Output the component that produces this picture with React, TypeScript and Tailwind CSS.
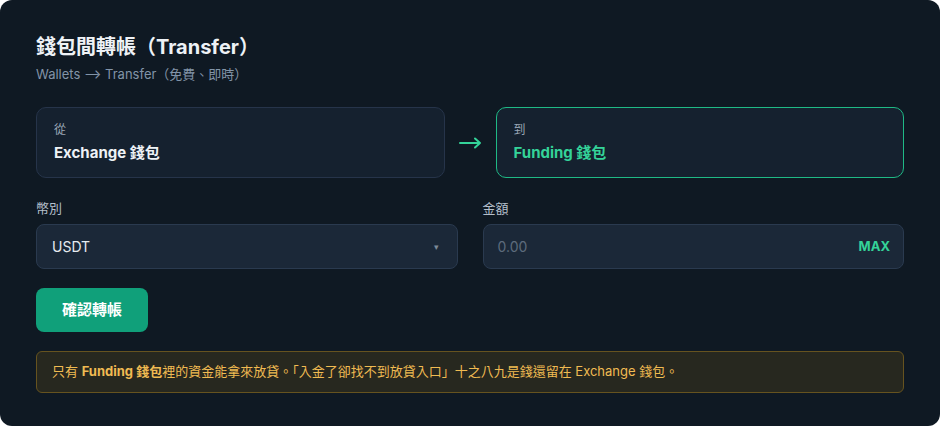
import React from "react";

const font = { fontFamily: '"Inter", "Noto Sans CJK TC", sans-serif' };

function WalletBox({ label, name, active }: { label: string; name: string; active?: boolean }) {
  return (
    <div
      className={`flex-1 h-[71px] rounded-[10px] border px-[17px] pt-[14px] ${
        active ? "border-[#1fb985] bg-[#15212f]" : "border-[#26344a] bg-[#15212f]"
      }`}
    >
      <div className="text-[12px] leading-4 text-[#9aa7b6]">{label}</div>
      <div className={`mt-[5px] text-[15px] leading-5 font-bold ${active ? "text-[#34d399]" : "text-[#eef2f6]"}`}>
        {name}
      </div>
    </div>
  );
}

export default function App() {
  return (
    <div style={font} className="w-[940px] h-[426px] bg-white">
      <div className="w-full h-full rounded-xl bg-[#0f1923] px-9 pt-[33px]">
        <h1 className="text-[20px] leading-7 font-bold text-[#eef2f6]">錢包間轉帳（Transfer）</h1>
        <p className="mt-1 text-[13px] leading-[18px] text-[#8294a8]">Wallets ⟶ Transfer（免費、即時）</p>

        <div className="mt-6 flex items-center">
          <WalletBox label="從" name="Exchange 錢包" />
          <div className="w-[51px] flex justify-center">
            <svg width="23" height="12" viewBox="0 0 23 12" fill="none">
              <path d="M1 6h20M16 1.5L21 6l-5 4.5" stroke="#34d399" strokeWidth="2" strokeLinecap="round" strokeLinejoin="round" />
            </svg>
          </div>
          <WalletBox label="到" name="Funding 錢包" active />
        </div>

        <div className="mt-[21px] grid grid-cols-2 gap-[25px]">
          <div>
            <div className="text-[13px] leading-[18px] text-[#b4bfcb]">幣別</div>
            <div className="mt-[7px] h-[45px] rounded-lg border border-[#2a3a4f] bg-[#1b2838] px-[15px] flex items-center justify-between">
              <span className="text-[14px] text-[#e6ebf0]">USDT</span>
              <span className="text-[9px] text-[#7d8a99] mr-[3px]">▾</span>
            </div>
          </div>
          <div>
            <div className="text-[13px] leading-[18px] text-[#b4bfcb]">金額</div>
            <div className="mt-[7px] h-[45px] rounded-lg border border-[#2a3a4f] bg-[#1b2838] pl-[14px] pr-[13px] flex items-center justify-between">
              <span className="text-[14px] text-[#5d6b7c]">0.00</span>
              <span className="text-[13px] font-bold text-[#34d399]">MAX</span>
            </div>
          </div>
        </div>

        <button className="mt-[19px] w-[112px] h-[44px] rounded-lg bg-[#10a07a] text-[15px] font-bold text-white">
          確認轉帳
        </button>

        <div className="mt-[19px] h-[42px] rounded-md border border-[#66531f] bg-[#27281f] px-[15px] flex items-center text-[13px] text-[#f0bb52]">
          <span>
            只有 <b className="font-bold">Funding 錢包</b>裡的資金能拿來放貸。「入金了卻找不到放貸入口」十之八九是錢還留在 Exchange 錢包。
          </span>
        </div>
      </div>
    </div>
  );
}
